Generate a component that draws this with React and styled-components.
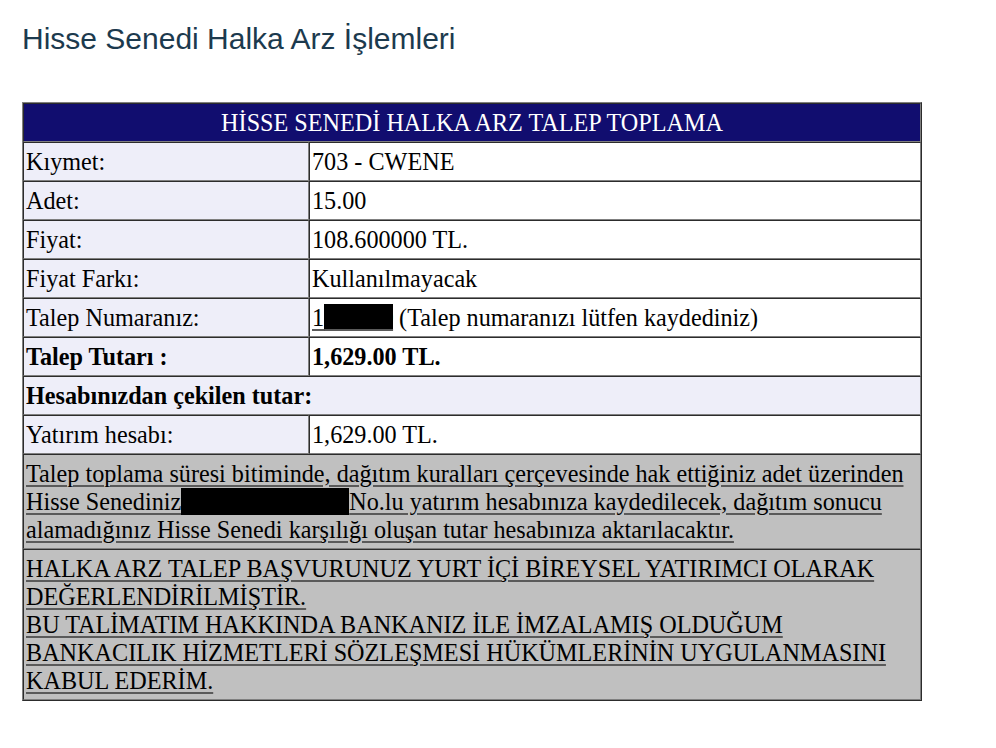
import styled, { createGlobalStyle } from 'styled-components';

const GlobalStyle = createGlobalStyle`
  body {
    margin: 0;
    background: #fff;
  }
`;

const Page = styled.div`
  padding: 22px 22px 40px;
`;

const Title = styled.h1`
  margin: 0;
  font-family: "Liberation Sans", Arial, sans-serif;
  font-size: 30px;
  font-weight: normal;
  color: #1c3a4e;
`;

const Table = styled.table`
  margin-top: 46px;
  width: 900px;
  border: 1px outset gray;
  border-spacing: 0;
  font-family: "Liberation Serif", "Times New Roman", serif;
  font-size: 24.2px;
  line-height: 28px;
  color: #000;
`;

const tones = {
  head: '#110d6f',
  label: '#eeeef9',
  value: '#ffffff',
  note: '#c0c0c0',
};

const Cell = styled.td`
  box-sizing: border-box;
  border: 1px inset gray;
  padding: 4.5px 2px;
  text-align: ${(p) => (p.$center ? 'center' : 'left')};
  background: ${(p) => tones[p.$tone || 'value']};
  color: ${(p) => (p.$tone === 'head' ? '#fff' : '#000')};
  font-weight: ${(p) => (p.$bold ? 'bold' : 'normal')};
  width: ${(p) => (p.$tone === 'label' ? '286px' : 'auto')};
  vertical-align: middle;
`;

const Link = styled.span`
  text-decoration: underline;
  text-decoration-color: #5a5a5a;
  text-decoration-thickness: 2px;
  text-underline-offset: 3px;
`;

const Hidden = styled.span`
  background: #000;
  color: #000;
  letter-spacing: -0.6px;
`;

const Blackout = styled.span`
  display: inline-block;
  width: 168px;
  height: 27px;
  background: #000;
  vertical-align: -5px;
`;

const rows = [
  ['Kıymet:', '703 - CWENE'],
  ['Adet:', '15.00'],
  ['Fiyat:', '108.600000 TL.'],
  ['Fiyat Farkı:', 'Kullanılmayacak'],
];

export default function App() {
  return (
    <Page>
      <GlobalStyle />
      <Title>Hisse Senedi Halka Arz İşlemleri</Title>
      <Table>
        <tbody>
          <tr>
            <Cell $tone="head" $center colSpan={2}>
              HİSSE SENEDİ HALKA ARZ TALEP TOPLAMA
            </Cell>
          </tr>
          {rows.map(([label, value]) => (
            <tr key={label}>
              <Cell $tone="label">{label}</Cell>
              <Cell>{value}</Cell>
            </tr>
          ))}
          <tr>
            <Cell $tone="label">Talep Numaranız:</Cell>
            <Cell>
              <Link>
                1<Hidden>000000</Hidden>
              </Link>{' '}
              (Talep numaranızı lütfen kaydediniz)
            </Cell>
          </tr>
          <tr>
            <Cell $tone="label" $bold>Talep Tutarı :</Cell>
            <Cell $bold>1,629.00 TL.</Cell>
          </tr>
          <tr>
            <Cell $tone="label" $bold colSpan={2}>
              Hesabınızdan çekilen tutar:
            </Cell>
          </tr>
          <tr>
            <Cell $tone="label">Yatırım hesabı:</Cell>
            <Cell>1,629.00 TL.</Cell>
          </tr>
          <tr>
            <Cell $tone="note" colSpan={2}>
              <Link>
                Talep toplama süresi bitiminde, dağıtım kuralları çerçevesinde hak ettiğiniz adet üzerinden
                Hisse Senediniz<Blackout />No.lu yatırım hesabınıza kaydedilecek, dağıtım sonucu
                alamadığınız Hisse Senedi karşılığı oluşan tutar hesabınıza aktarılacaktır.
              </Link>
            </Cell>
          </tr>
          <tr>
            <Cell $tone="note" colSpan={2}>
              <Link>
                HALKA ARZ TALEP BAŞVURUNUZ YURT İÇİ BİREYSEL YATIRIMCI OLARAK DEĞERLENDİRİLMİŞTİR.
                <br />
                BU TALİMATIM HAKKINDA BANKANIZ İLE İMZALAMIŞ OLDUĞUM BANKACILIK HİZMETLERİ
                SÖZLEŞMESİ HÜKÜMLERİNİN UYGULANMASINI KABUL EDERİM.
              </Link>
            </Cell>
          </tr>
        </tbody>
      </Table>
    </Page>
  );
}
